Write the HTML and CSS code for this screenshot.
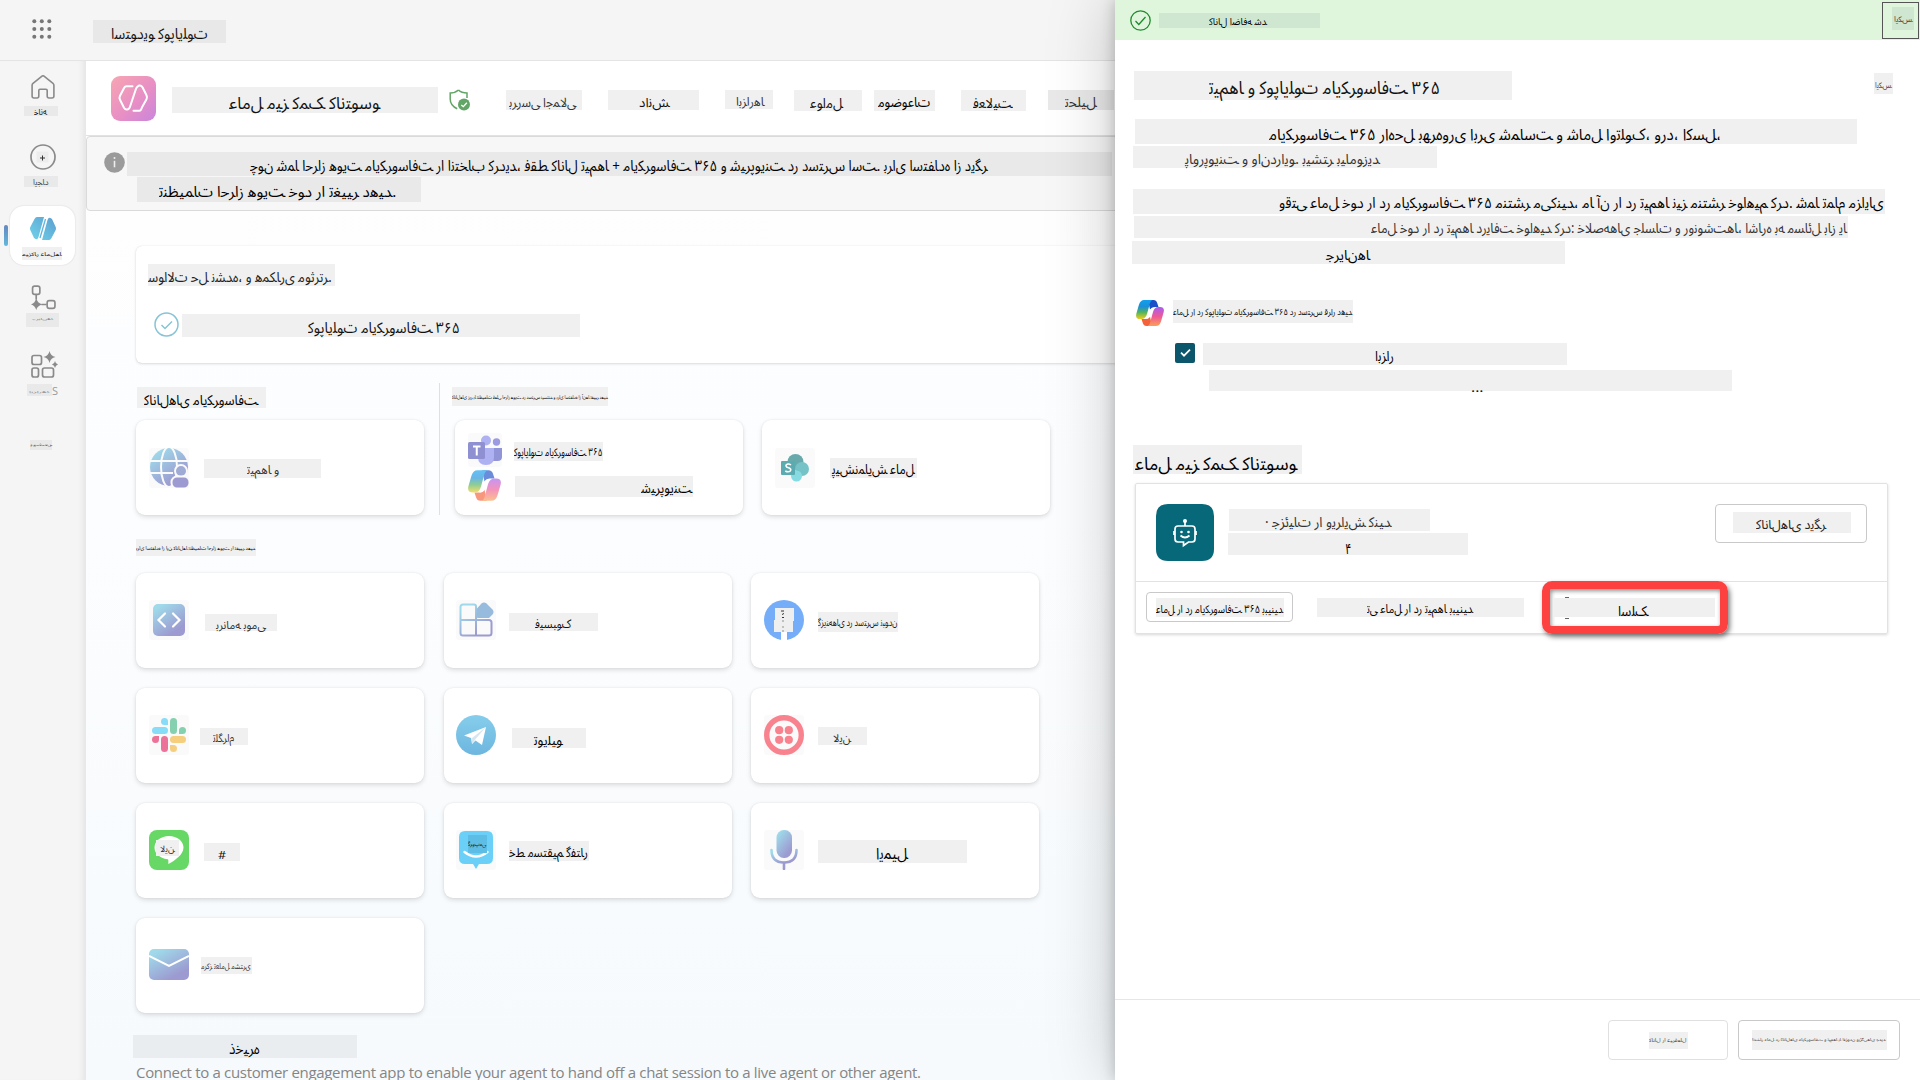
FILE: index.html
```html
<!DOCTYPE html>
<html lang="fa" dir="ltr">
<head>
<meta charset="utf-8">
<title>استودیو کوپایلوت</title>
<link rel="stylesheet" href="styles.css">
</head>
<body>
<svg class="defs" width="0" height="0">
  <defs>
    <linearGradient id="soft" x1="0" y1="0" x2=".7" y2="1"><stop offset=".15" stop-color="#9fd9ea"/><stop offset=".9" stop-color="#9c9ad0"/></linearGradient>
    <linearGradient id="pink" x1="0" y1="0" x2="1" y2="1"><stop offset="0" stop-color="#f7a6b2"/><stop offset=".55" stop-color="#e88fc4"/><stop offset="1" stop-color="#c985dc"/></linearGradient>
    <linearGradient id="blue" x1="1" y1="0" x2="0" y2="1"><stop offset="0" stop-color="#5b9fd0"/><stop offset="1" stop-color="#70d3ea"/></linearGradient>
    <linearGradient id="cpA" x1="0" y1="0" x2="0" y2="1"><stop offset="0" stop-color="#12a0f0"/><stop offset=".35" stop-color="#1b8fd8"/><stop offset=".65" stop-color="#52b45c"/><stop offset="1" stop-color="#f2cc1c"/></linearGradient>
    <linearGradient id="cpB" x1="0" y1="0" x2="0" y2="1"><stop offset="0" stop-color="#a85cf0"/><stop offset=".5" stop-color="#ee5a96"/><stop offset="1" stop-color="#fba055"/></linearGradient>
    <linearGradient id="tg" x1="0" y1="0" x2="0" y2="1"><stop offset="0" stop-color="#86cdec"/><stop offset="1" stop-color="#6db6de"/></linearGradient>
    <symbol id="copilot" viewBox="0 0 28 26">
      <path d="M12 0h5.500q2.800 0 3.700 3l1.300 4H19q-3.500 0-5 2.500z" fill="#1c50c8"/>
      <path d="M16 26h-5.500q-2.800 0-3.700-3l-1.300-4H9q3.500 0 5-2.500z" fill="#f4623a"/>
      <path d="M8 0h8.500q-1.800.5-2.500 3l-3 11q-1.400 5-5.500 5H4q-5 0-3.600-5.500L3 4.500Q4.500 0 8 0z" fill="url(#cpA)"/>
      <path d="M20 26h-8.500q1.800-.5 2.500-3l3-11q1.400-5 5.500-5H24q5 0 3.600 5.500l-2.600 9Q23.500 26 20 26z" fill="url(#cpB)"/>
      <path d="M19 7.200q-3.500 0-5 2.500L12.200 15q-.8 3-2.700 4 3.500 0 5-3l1.800-5.300q.8-2.700 2.700-3.500z" fill="#fff"/>
    </symbol>
  </defs>
</svg>
<div class="app">
  <header class="topbar">
    <svg class="waffle" viewBox="0 0 20 20" fill="#777"><circle cx="2.300" cy="2.300" r="2"/><circle cx="9.800" cy="2.300" r="2"/><circle cx="17.300" cy="2.300" r="2"/><circle cx="2.300" cy="10" r="2"/><circle cx="9.800" cy="10" r="2"/><circle cx="17.300" cy="10" r="2"/><circle cx="2.300" cy="17.700" r="2"/><circle cx="9.800" cy="17.700" r="2"/><circle cx="17.300" cy="17.700" r="2"/></svg>
    <span class="c product">استودیو کوپایلوت</span>
  </header>

  <nav class="rail">
    <svg class="i-home" viewBox="0 0 24 24" fill="none" stroke="#8a8a8a" stroke-width="1.600"><path d="M10.700 1.300 2 8.300q-.9.700-.9 2V21q0 2 1.900 2h3q1.800 0 1.800-2v-5.500q0-1.200 1.200-1.200h6q1.200 0 1.200 1.200V21q0 2 1.800 2h3q1.900 0 1.900-2V10.300q0-1.300-.9-2l-8.700-7q-1.300-1-2.600 0z"/></svg>
    <span class="c n-home">خانه</span>
    <svg class="i-plus" viewBox="0 0 26 26"><circle cx="13" cy="13" r="12" fill="none" stroke="#8a8a8a" stroke-width="1.700"/><path d="M6.500 7.500h12v11h-12z" fill="#ececec"/><path d="M10 14h5m-2.500-2.500v5" stroke="#333"/></svg>
    <span class="c n-make">ایجاد</span>
    <div class="current">
      <svg class="i-agent" viewBox="0 0 26 23"><path d="M7 0h7L8.500 20q-1 3-3 2L4 21 .3 13q-.6-1.500 0-3L4.500 2Q5.500 0 7 0zM19 23h-7l5.500-20q1-3 3-2L22 2l3.700 8q.6 1.500 0 3l-4.200 8q-1 2-2.500 2z" fill="url(#blue)"/><path d="M15.500 2 10 21" stroke="#5fb4dc" stroke-width="1.300"/></svg>
      <span class="c n-agent">میزکار عامل‌ها</span>
    </div>
    <svg class="i-flow" viewBox="0 0 24 24" fill="none" stroke="#8a8a8a" stroke-width="1.600"><rect x="1.500" y="1" width="7" height="8" rx="2"/><rect x="15.500" y="15" width="7.500" height="7.500" rx="2"/><path d="M5 9v5M10 18.700h5"/><path d="M5 12.500q1 5 6 6.200-5 1-6 5.300-1-4.300-5-5.300 4-1.200 5-6.200z" fill="#8a8a8a" stroke="none"/></svg>
    <span class="c n-flow">جریان‌ها</span>
    <svg class="i-tools" viewBox="0 0 27 27" fill="none" stroke="#8a8a8a" stroke-width="1.700"><rect x="1" y="4.500" width="9.500" height="9" rx="2"/><rect x="1" y="17" width="6.500" height="9" rx="2"/><rect x="11.500" y="17" width="11" height="9" rx="2"/><path d="M18.500 0q1 5 6 6-5 1-6 6-1-5-6-6 5-1 6-6zM24 10q.5 3 3 3.500-2.500.5-3 3.500-.5-3-3-3.500 2.500-.5 3-3.500z" fill="#8a8a8a" stroke="none"/></svg>
    <div class="n-tools-row"><span class="c n-tools">ابزارها</span><span class="latin">S</span></div>
    <span class="c n-more">بیشتر</span>
  </nav>

  <main class="main">
    <div class="agentbar">
      <svg class="i-app" viewBox="0 0 45 45"><rect width="45" height="45" rx="9" fill="url(#pink)"/><path d="M21.500 11h-6q-1.500 0-2.300 1.500L9 20.500q-1 2 0 4l4 8q1.500 2.500 4 1.500 1.500-.7 2-2.500l6-18q.7-2 2.500-3 2.500-.8 4 1.500l4 8q1 2 0 4l-4.500 8Q30 35.500 28.500 35.500h-6" transform="translate(0 -.7)" fill="none" stroke="#fff" stroke-width="2" stroke-linecap="round"/></svg>
      <span class="c agent-name">عامل میز کمک کانتوسو</span>
      <svg class="i-shield" viewBox="0 0 21 22"><path d="M9.500 1Q6 4 1.200 4v6q0 6.500 7 9.800M9.500 1q3 3 8.500 3v5" fill="none" stroke="#62a566" stroke-width="1.500"/><circle cx="15" cy="15.500" r="6" fill="#62a566"/><path d="m12.300 16 2 1.700 3.600-4" fill="none" stroke="#fff" stroke-width="1.300"/></svg>
      <span class="c tab1">بررسی اجمالی</span>
      <span class="c tab2">دانش</span>
      <span class="c tab3">ابزارها</span>
      <span class="c tab4">عوامل</span>
      <span class="c tab5">موضوعات</span>
      <span class="c tab6">فعالیت</span>
      <span class="c tab7">تحلیل</span>
    </div>
    <div class="notice">
      <svg class="i-info" viewBox="0 0 21 21"><circle cx="10.500" cy="10.500" r="10.300" fill="#9b9b9b"/><path d="M10.500 8.800v6.500" stroke="#eee" stroke-width="1.600"/><circle cx="10.500" cy="6" r="1" fill="#eee"/></svg>
      <div>
        <span class="c note1">چون شما احراز هویت مایکروسافت را انتخاب کردید، فقط کانال تیم‌ها + مایکروسافت ۳۶۵ و شیرپوینت در دسترس است. برای استفاده از دیگر</span>
        <span class="c note2">تنظیمات احراز هویت خود را تغییر دهید.</span>
      </div>
    </div>
    <section class="publish">
      <span class="c pub-title">سوالات حل نشده، و همکاری موثرتر.</span>
      <div class="row">
        <svg class="i-done" viewBox="0 0 25 25" fill="none" stroke="#86c4d6" stroke-width="1.500"><circle cx="12.500" cy="12.500" r="11.500"/><path d="m7.500 13 3.500 3.500 7-7"/></svg>
        <span class="c pub-item">کوپایلوت مایکروسافت ۳۶۵</span>
      </div>
    </section>

    <div class="groups">
      <section>
        <span class="c g1">کانال‌های مایکروسافت</span>
        <div class="card first">
          <svg class="ico" viewBox="0 0 40 40"><rect width="40" height="40" rx="3" fill="#fafafa"/><circle cx="20" cy="19" r="19" fill="url(#soft)"/><g fill="none" stroke="#fafafa" stroke-width="2"><ellipse cx="20" cy="19" rx="8" ry="20"/><path d="M0 13h40M0 25h24"/></g><circle cx="32" cy="23" r="6" fill="#9fabd4" stroke="#fafafa" stroke-width="2"/><rect x="22.500" y="28.500" width="18" height="12" rx="5.500" fill="#9c9ad0" stroke="#fafafa" stroke-width="2"/></svg>
          <span class="c k1">تیم‌ها و</span>
        </div>
      </section>
      <section class="second">
        <span class="c g2">کانال‌های زیر با تنظیمات فعلی احراز هویت در دسترس نیستند و برای استفاده از آن‌ها تغییر دهید</span>
        <div class="pair">
          <div class="card double">
            <div class="row">
              <svg class="i-teams" viewBox="0 0 34 34"><rect width="34" height="34" rx="3" fill="#fafafa"/><circle cx="28.500" cy="9" r="3.700" fill="#9a9be0"/><path d="M25 15h9v9q0 4-4.500 4H25z" fill="#9294d8"/><circle cx="18" cy="7.500" r="5" fill="#aeb1f2"/><path d="M10 15h16v9q0 8-8 8t-8-8z" fill="#aeb1f2"/><rect y="9" width="17" height="17" rx="1.500" fill="#8e90d2"/><path d="M5 13.500h7.500m-3.750 0v9" stroke="#fff" stroke-width="2"/></svg>
              <span class="c k2">کوپایلوت مایکروسافت ۳۶۵</span>
            </div>
            <div class="row">
              <svg class="i-cp faded"><use href="#copilot"/></svg>
              <span class="c k3">شیرپوینت</span>
            </div>
          </div>
          <div class="card">
            <svg class="ico" viewBox="0 0 40 40"><rect width="40" height="40" rx="3" fill="#fafafa"/><circle cx="20.500" cy="14" r="8" fill="#68a9ab"/><circle cx="27" cy="21" r="7" fill="#75c3c7"/><circle cx="21.500" cy="28" r="5.500" fill="#86dbe2"/><rect x="6" y="13" width="14" height="14" rx="1" fill="#5cabb0"/><path d="M16 17q-1.500-1.200-3.200-1-2 .4-1.800 2 .3 1.300 2.500 1.800 2.500.7 2.300 2.300-.5 1.800-2.800 1.700-1.500 0-2.700-1" fill="none" stroke="#fff" stroke-width="1.500"/></svg>
            <span class="c k4">پیش‌نمایش عامل</span>
          </div>
        </div>
      </section>
    </div>

    <span class="c g3">برای استفاده از این کانال‌ها تنظیمات احراز هویت را تغییر دهید</span>
    <div class="grid">
      <div class="card">
        <svg class="ico" viewBox="0 0 40 40"><rect width="40" height="40" rx="3" fill="#fafafa"/><rect x="4" y="4" width="32" height="32" rx="5" fill="url(#soft)"/><path d="m16 13.500-6.500 6.500 6.500 6.500m8-13 6.500 6.500-6.500 6.500" fill="none" stroke="#fff" stroke-width="2.200" stroke-linecap="round"/></svg>
        <span class="c k5">برنامه بومی</span>
      </div>
      <div class="card">
        <svg class="ico" viewBox="0 0 40 40"><rect width="40" height="40" rx="3" fill="#fafafa"/><path d="M7 4.500h11a2 2 0 0 1 2 2V20H4.500V7q0-2.500 2.500-2.500zM4.500 20H20v15.500H7q-2.500 0-2.500-2.500zM20 20h13q2.500 0 2.500 2.500V33q0 2.500-2.500 2.500H20z" fill="none" stroke="url(#soft)" stroke-width="2"/><path d="M25.500 3.500q2.500-2 5 0l6 6q2 2.500 0 5L33 18H22q-1.500 0-1.500-1.500V9z" fill="#97bbdd"/></svg>
        <span class="c k6">فیسبوک</span>
      </div>
      <div class="card">
        <svg class="ico" viewBox="0 0 40 40"><circle cx="20" cy="20" r="20" fill="#76adf8"/><path d="M17 31h6v9h-6z" fill="#fff"/><path d="M11 8h19v13h-1v11H10V20h1z" fill="#efefef"/><path d="M17 11h3m-2 3.500 2-1m-2 4h2m-1 3v1m0 5v1m0 3v1" stroke="#333"/></svg>
        <span class="c k7">گزینه‌های در دسترس نبودن</span>
      </div>
      <div class="card">
        <svg class="ico" viewBox="0 0 40 40"><rect width="40" height="40" rx="3" fill="#fafafa"/><g stroke-width="7" stroke-linecap="round"><path d="M6.500 15.500h9" stroke="#87dcf7"/><path d="M24.500 6.500v9" stroke="#84d0af"/><path d="M15.500 24.500v9" stroke="#ec7299"/><path d="M24.500 24.500h9" stroke="#f5cf7e"/></g><path d="M15.500 3a3.500 3.500 0 1 0 0 7H19V6.500A3.500 3.500 0 0 0 15.500 3z" fill="#87dcf7"/><path d="M37 15.500a3.500 3.500 0 1 0-7 0V19h3.500a3.500 3.500 0 0 0 3.500-3.500z" fill="#84d0af"/><path d="M3 24.500a3.500 3.500 0 1 0 7 0V21H6.500A3.500 3.500 0 0 0 3 24.500z" fill="#ec7299"/><path d="M24.500 37a3.500 3.500 0 1 0 0-7H21v3.500a3.500 3.500 0 0 0 3.500 3.500z" fill="#f5cf7e"/></svg>
        <span class="c k8">تلگرام</span>
      </div>
      <div class="card">
        <svg class="ico" viewBox="0 0 40 40"><circle cx="20" cy="20" r="20" fill="url(#tg)"/><path d="M8 20.500 30 12 26 30l-6.500-4.500-3.500 3.500-1-6z" fill="#fff"/><path d="m30 12-14.500 11.500.8 5.500 2.500-4z" fill="#d5e6f0"/></svg>
        <span class="c k9">تویلیو</span>
      </div>
      <div class="card">
        <svg class="ico" viewBox="0 0 40 40"><rect width="40" height="40" rx="3" fill="#fafafa"/><circle cx="20" cy="20" r="17.300" fill="#fafafa" stroke="#f8838f" stroke-width="5.400"/><g fill="#f8838f"><circle cx="15.200" cy="15.200" r="4.100"/><circle cx="24.800" cy="15.200" r="4.100"/><circle cx="15.200" cy="24.800" r="4.100"/><circle cx="24.800" cy="24.800" r="4.100"/></g></svg>
        <span class="c k10">لاین</span>
      </div>
      <div class="card">
        <div class="badge">
          <svg class="ico" viewBox="0 0 40 40"><rect width="40" height="40" rx="8" fill="#67d766"/><path d="M20 6c-8 0-14.500 5-14.500 11.500 0 6 5 10.500 13 11.800 1 .2 1 1 .8 4.700 6-3.200 15.200-9 15.200-16.500C34.500 11 28 6 20 6z" fill="#fff"/></svg>
          <span class="c line-tag">لاین</span>
        </div>
        <span class="c k11">#</span>
      </div>
      <div class="card">
        <div class="badge">
          <svg class="ico" viewBox="0 0 40 40"><rect width="40" height="40" rx="3" fill="#fafafa"/><path d="M9 1h22q6 0 6 6v21q0 6-6 6h-8l-3 5-3-5H9q-6 0-6-6V7q0-6 6-6z" fill="#6bd0f7"/><path d="M8.500 22q11.500 9 23 0" fill="none" stroke="#fff" stroke-width="2.400" stroke-linecap="round"/></svg>
          <span class="c gm-tag">گروپ‌می</span>
        </div>
        <span class="c k12">خط مستقیم گفتار</span>
      </div>
      <div class="card">
        <svg class="ico" viewBox="0 0 40 40"><rect width="40" height="40" rx="3" fill="#fafafa"/><rect x="12.500" y="0" width="15.500" height="28" rx="7.500" fill="url(#soft)"/><path d="M7.500 20q0 12.500 12.500 12.500T32.500 20" fill="none" stroke="url(#soft)" stroke-width="2.600" stroke-linecap="round"/><path d="M20 33v6" stroke="#9c9ad0" stroke-width="2.600" stroke-linecap="round"/></svg>
        <span class="c k13">ایمیل</span>
      </div>
      <div class="card">
        <svg class="ico" viewBox="0 0 40 40"><rect y="4" width="40" height="31" rx="5" fill="url(#soft)"/><path d="m0 11 20 10 20-10" fill="none" stroke="#fff" stroke-width="2"/></svg>
        <span class="c k14">مرکز تعامل مشتری</span>
      </div>
    </div>
    <span class="c store">ذخیره</span>
    <p class="hint">Connect to a customer engagement app to enable your agent to hand off a chat session to a live agent or other agent.</p>
  </main>
</div>

<aside class="drawer">
  <div class="toast">
    <svg class="i-ok" viewBox="0 0 21 21" fill="none" stroke="#1f8a2b" stroke-width="1.300"><circle cx="10.500" cy="10.500" r="9.700"/><path d="m5.500 11 3.300 3.500L15.500 7"/></svg>
    <span class="c ok-text">کانال اضافه شد</span>
    <div class="toast-close"><span class="c x1">ایکس</span></div>
  </div>
  <div class="body">
    <div class="row">
      <span class="c d-title">تیم‌ها و کوپایلوت مایکروسافت ۳۶۵</span>
      <span class="c x2">ایکس</span>
    </div>
    <span class="c p1">مایکروسافت ۳۶۵ راه‌حل بهره‌وری ابری شماست و شامل اوتلوک، ورد، اکسل،</span>
    <span class="c p2">پاورپوینت و وان‌درایو. بیشتر بیاموزید</span>
    <span class="c p3">وقتی عامل خود را در مایکروسافت ۳۶۵ منتشر می‌کنید، ما آن را در تیم‌ها نیز منتشر خواهیم کرد. شما تمام مزایای</span>
    <span class="c p4">عامل خود را در تیم‌ها دریافت خواهید کرد: خلاصه‌های جلسات و رونوشت‌ها، اشاره به مسائل باز یا</span>
    <span class="c p5">جریان‌ها</span>
    <div class="row enable">
      <svg class="i-cp2"><use href="#copilot"/></svg>
      <span class="c e1">عامل را در کوپایلوت مایکروسافت ۳۶۵ در دسترس قرار دهید</span>
    </div>
    <div class="row tick">
      <svg class="i-box" viewBox="0 0 20 20"><rect width="20" height="20" rx="2" fill="#0c566b"/><path d="m6 9.700 3 3 6-6" fill="none" stroke="#fff" stroke-width="1.700"/></svg>
      <span class="c e2">ابزار</span>
    </div>
    <span class="c e3">...</span>
    <span class="c h2">عامل میز کمک کانتوسو</span>
    <div class="panel">
      <div class="panel-top">
        <svg class="i-bot" viewBox="0 0 58 57"><path d="M12 0h34q12 0 12 12v33q0 12-12 12H12Q0 57 0 45V12Q0 0 12 0z" fill="#066879"/><g fill="none" stroke="#fff" stroke-width="1.700"><path d="M22 22h14q3 0 3 3v10q0 3-3 3h-3.500l-5 3.500V38H22q-3 0-3-3V25q0-3 3-3zM29 17v5M18 27v4M40 27v4"/><path d="M24.500 31.500q4.500 4 9 0"/></g><g fill="#fff"><circle cx="29" cy="17" r="2"/><circle cx="25.500" cy="28" r="1.300"/><circle cx="32.500" cy="28" r="1.300"/></g></svg>
        <div class="facts">
          <span class="c f1">· جزئیات را ویرایش کنید</span>
          <span class="c f2">۴</span>
        </div>
        <div class="btn other"><span class="c b1">کانال‌های دیگر</span></div>
      </div>
      <div class="panel-bottom">
        <div class="btn see"><span class="c b2">عامل را در مایکروسافت ۳۶۵ ببینید</span></div>
        <span class="c b3">تی عامل را در تیم‌ها ببینید</span>
        <div class="focus"><span class="c b4">اسلک</span></div>
      </div>
    </div>
  </div>
  <footer class="foot">
    <div class="btn soft"><span class="c b5">کانال را غیرفعال</span></div>
    <div class="btn"><span class="c b6">انتشار عامل در کانال‌های مایکروسافت و تیم‌ها با افزودن ویژگی‌های جدید</span></div>
  </footer>
</aside>
<script src="labels.js"></script>
</body>
</html>
```

FILE: styles.css
```css
* { box-sizing: border-box; }
html, body { margin: 0; height: 1080px; overflow: hidden; }
body { position: relative; width: 1920px; background: #f5f5f5; color: #111; font-family: "Noto Sans Arabic", "DejaVu Sans", "Noto Sans", sans-serif; }
svg { display: block; flex: none; }
.defs { position: absolute; }
.row { display: flex; align-items: flex-start; }

/* Label plates. --w/--h plate size, --l/--t margins, --x text offset, --tw text width, --f font size, --y text drop */
.c {
  display: block; flex: none;
  width: var(--w); height: var(--h);
  margin: var(--t, 0) 0 0 var(--l, 0);
  padding-left: var(--x, 0);
  background: #f0f0f0;
  white-space: nowrap;
  font-size: var(--f, 14px);
  line-height: var(--h);
}
.c .ink { display: inline-block; direction: ltr; unicode-bidi: bidi-override; transform-origin: 0 50%; margin-top: var(--y, 2px); line-height: var(--h); vertical-align: top; }

.app { display: grid; grid-template: 61px 1019px / 85px 1835px; }
.topbar { grid-column: 1 / 3; display: flex; border-bottom: 1px solid #e4e4e4; }
.waffle { width: 20px; height: 20px; margin: 19px 0 0 32px; }
.product { --w: 133px; --h: 23px; --l: 41px; --t: 20px; --x: 18px; --tw: 97px; --f: 15px; --y: 3px; background: #e8e8e8; }

.rail { display: flex; flex-direction: column; align-items: flex-start; box-shadow: inset -6px 0 6px -4px #00000012; }
.rail .c { background: #e9e9e9; }
.i-home { width: 24px; height: 24px; margin: 14px 0 0 31px; }
.n-home { --w: 34px; --h: 10px; --l: 24px; --t: 7px; --x: 10px; --tw: 13px; --f: 9px; --y: 2px; }
.i-plus { width: 26px; height: 26px; margin: 28px 0 0 30px; }
.n-make { --w: 34px; --h: 11px; --l: 24px; --t: 6px; --x: 9px; --tw: 16px; --f: 8px; --y: 1px; color: #444; }
.current { position: relative; width: 65px; height: 59px; margin: 19px 0 0 10px; background: #fff; border-radius: 14px; box-shadow: 0 0 2px #00000024; padding: 11px 0 0 12px; }
.current::before { content: ""; position: absolute; left: -6px; top: 19px; width: 4px; height: 21px; border-radius: 2px; background: linear-gradient(#6488c0, #62b8dc); }
.i-agent { width: 26px; height: 23px; margin-left: 8px; }
.rail .n-agent { --w: 40px; --h: 13px; --t: 7px; --tw: 40px; --f: 5px; --y: 1px; background: #f0f0f0; }
.i-flow { width: 25px; height: 25px; margin: 20px 0 0 31px; }
.n-flow { --w: 33px; --h: 14px; --l: 26px; --t: 3px; --x: 6px; --tw: 20px; --f: 3px; --y: -1px; color: #777; }
.i-tools { width: 27px; height: 27px; margin: 24px 0 0 31px; }
.n-tools-row { display: flex; margin: 6px 0 0 27px; }
.n-tools { --w: 25px; --h: 12px; --x: 2px; --tw: 20px; --f: 3px; color: #888; }
.latin { font: 11px/13px "Open Sans", sans-serif; color: #999; }
.n-more { --w: 22px; --h: 10px; --l: 30px; --t: 43px; --tw: 22px; --f: 4px; --y: 0px; color: #555; }

.main { display: flex; flex-direction: column; align-items: flex-start; background: linear-gradient(#fefefe, #fcfdfe 45%, #f6fafd); border-left: 1px solid #e8e8e8; padding-left: 50px; overflow: hidden; }
.agentbar { display: flex; flex: none; width: 1834px; height: 75px; margin-left: -50px; background: #fff; border-bottom: 1px solid #e2e2e2; }
.i-app { width: 45px; height: 45px; margin: 15px 0 0 25px; }
.agent-name { --w: 266px; --h: 26px; --l: 16px; --t: 26px; --x: 57px; --tw: 151px; --f: 17px; --y: 4px; }
.i-shield { width: 21px; height: 22px; margin: 28px 0 0 11px; }
.tab1 { --w: 76px; --h: 20px; --l: 36px; --t: 29px; --x: 3px; --tw: 67px; --f: 13px; --y: 3px; color: #333; }
.tab2 { --w: 91px; --h: 20px; --l: 26px; --t: 29px; --x: 31px; --tw: 30px; --f: 13px; --y: 3px; }
.tab3 { --w: 48px; --h: 19px; --l: 26px; --t: 29px; --x: 11px; --tw: 28px; --f: 12px; --y: 3px; color: #333; }
.tab4 { --w: 68px; --h: 21px; --l: 21px; --t: 29px; --x: 16px; --tw: 33px; --f: 14px; --y: 3px; }
.tab5 { --w: 61px; --h: 21px; --l: 12px; --t: 29px; --x: 4px; --tw: 52px; --f: 14px; color: #000; }
.tab6 { --w: 65px; --h: 21px; --l: 26px; --t: 29px; --x: 12px; --tw: 39px; --f: 14px; --y: 3px; }
.tab7 { --w: 66px; --h: 20px; --l: 22px; --t: 29px; --x: 17px; --tw: 31px; --f: 14px; --y: 3px; color: #333; }
.main .agentbar .tab7 { background: #e9e9e9; }

.notice { display: flex; flex: none; width: 1834px; height: 75px; margin-left: -50px; padding: 15px 0 0 17px; background: #f7f7f7; border: 1px solid #dadada; border-radius: 4px; }
.notice .c { background: #e9e9e9; }
.i-info { width: 21px; height: 21px; }
.note1 { --w: 985px; --h: 24px; --l: 2px; --x: 123px; --tw: 737px; --f: 15px; color: #000; }
.note2 { --w: 284px; --h: 25px; --l: 12px; --t: 1px; --x: 22px; --tw: 237px; --f: 15px; --y: 3px; color: #000; }

.publish { flex: none; width: 1700px; height: 117px; margin-top: 35px; padding: 18px 0 0 12px; background: #fff; border-radius: 6px; box-shadow: 0 1px 3px #00000022, 0 0 1px #00000022; }
.pub-title { --w: 187px; --h: 22px; --tw: 184px; --f: 14px; --y: 3px; color: #222; }
.i-done { width: 25px; height: 25px; margin: 26px 0 0 6px; }
.pub-item { --w: 398px; --h: 23px; --l: 3px; --t: 28px; --x: 126px; --tw: 152px; --f: 15px; --y: 3px; }

.groups { display: flex; flex: none; margin-top: 20px; height: 132px; }
.second { margin-left: 15px; padding-left: 12px; border-left: 1px solid #e0e0e0; }
.g1 { --w: 129px; --h: 21px; --l: 1px; --t: 4px; --x: 7px; --tw: 114px; --f: 14px; --y: 3px; color: #000; }
.g2 { --w: 156px; --h: 19px; --t: 4px; --tw: 156px; --f: 5px; --y: 1px; color: #000; }
.pair { display: flex; gap: 19px; margin: 14px 0 0 3px; }
.card { display: flex; flex: none; align-items: flex-start; width: 288px; height: 95px; padding: 27px 0 0 13px; background: #fff; border-radius: 9px; box-shadow: 0 2px 5px #00000021, 0 0 2px #00000014; }
.first, .pair .card { padding-top: 28px; }
.first { margin-top: 12px; }
.ico { width: 40px; height: 40px; }
.badge { position: relative; }
.pair .double { flex-direction: column; padding-top: 13px; }
.i-teams { width: 34px; height: 34px; }
.i-cp { width: 33px; height: 31px; margin-top: 3px; }
.faded { opacity: .65; }
.k1 { --w: 117px; --h: 19px; --l: 15px; --t: 11px; --x: 43px; --tw: 32px; --f: 12px; color: #333; }
.k2 { --w: 89px; --h: 19px; --l: 12px; --t: 9px; --tw: 88px; --f: 11px; --y: 1px; color: #000; }
.k3 { --w: 178px; --h: 21px; --l: 14px; --t: 9px; --x: 126px; --tw: 51px; --f: 14px; color: #000; }
.k4 { --w: 87px; --h: 20px; --l: 15px; --t: 10px; --x: 2px; --tw: 82px; --f: 14px; color: #000; }
.g3 { --w: 120px; --h: 17px; --t: 24px; --tw: 119px; --f: 5px; --y: 1px; color: #000; }
.grid { display: grid; flex: none; grid-template-columns: 308px 307px 288px; row-gap: 20px; margin-top: 17px; }
.grid .card:nth-child(3n + 2) { padding-left: 12px; }
.k5 { --w: 72px; --h: 17px; --l: 16px; --t: 14px; --x: 11px; --tw: 49px; --f: 11px; --y: 3px; color: #333; }
.k6 { --w: 89px; --h: 18px; --l: 13px; --t: 13px; --x: 26px; --tw: 36px; --f: 12px; --y: 3px; }
.k7 { --w: 80px; --h: 20px; --l: 14px; --t: 12px; --tw: 79px; --f: 10px; --y: 1px; }
.k8 { --w: 48px; --h: 17px; --l: 11px; --t: 13px; --x: 13px; --tw: 21px; --f: 11px; color: #333; }
.k9 { --w: 74px; --h: 20px; --l: 16px; --t: 13px; --x: 22px; --tw: 28px; --f: 13px; --y: 3px; color: #000; }
.k10 { --w: 49px; --h: 18px; --l: 14px; --t: 12px; --x: 15px; --tw: 18px; --f: 11px; --y: 3px; color: #333; }
.k11 { --w: 36px; --h: 18px; --l: 15px; --t: 13px; --x: 14px; --tw: 8px; --f: 11px; --y: 4px; }
.k12 { --w: 80px; --h: 20px; --l: 13px; --t: 11px; --tw: 79px; --f: 13px; --y: 2px; color: #000; }
.k13 { --w: 149px; --h: 23px; --l: 14px; --t: 10px; --x: 58px; --tw: 32px; --f: 16px; --y: 3px; color: #000; }
.k14 { --w: 51px; --h: 17px; --l: 12px; --t: 12px; --tw: 50px; --f: 8px; --y: 1px; color: #333; }
.line-tag { position: absolute; left: 7px; top: 10px; --w: 23px; --h: 16px; --x: 4px; --tw: 15px; --f: 9px; color: #333; }
.badge .gm-tag { position: absolute; left: 12px; top: 5px; --w: 19px; --h: 18px; --tw: 18px; --f: 6px; --y: 0px; background: #5dbde4; }
.store { --w: 224px; --h: 23px; --l: -3px; --t: 22px; --x: 96px; --tw: 31px; --f: 15px; --y: 3px; color: #000; }
.main .store { background: #e9edf0; }
.hint { margin: 2px 0 0; height: 20px; font: 15px/24px "Open Sans", sans-serif; letter-spacing: -.32px; color: #858585; white-space: nowrap; }

/* Side sheet over the page */
.drawer { position: absolute; top: 0; right: 0; width: 805px; height: 1080px; display: flex; flex-direction: column; background: #fff; box-shadow: 0 0 64px #00000038, 0 0 14px #00000038; }
.toast { display: flex; flex: none; height: 40px; background: #dff6dd; }
.toast .c { background: #cfe7d0; }
.i-ok { width: 21px; height: 21px; margin: 10px 0 0 15px; }
.ok-text { --w: 161px; --h: 15px; --l: 8px; --t: 13px; --x: 50px; --tw: 58px; --f: 10px; --y: 1px; color: #000; }
.toast-close { width: 37px; height: 37px; margin: 2px 1px 0 auto; border: 1px solid #555; padding: 4px 0 0 9px; }
.x1 { --w: 22px; --h: 23px; --x: 2px; --tw: 19px; --f: 8px; --y: 1px; color: #444; }
.body { flex: 1; padding: 31px 0 0 17px; }
.d-title { --w: 378px; --h: 29px; --l: 2px; --x: 75px; --tw: 231px; --f: 18px; --y: 3px; }
.x2 { --w: 19px; --h: 21px; --l: 362px; --t: 2px; --x: 1px; --tw: 17px; --f: 8px; --y: 2px; color: #444; }
.p1 { --w: 722px; --h: 25px; --l: 3px; --t: 19px; --x: 134px; --tw: 452px; --f: 16px; --y: 4px; color: #000; }
.p2 { --w: 304px; --h: 22px; --l: 1px; --t: 2px; --x: 52px; --tw: 194px; --f: 14px; --y: 3px; color: #333; }
.p3 { --w: 752px; --h: 25px; --l: 1px; --t: 21px; --x: 146px; --tw: 605px; --f: 15px; color: #000; }
.p4 { --w: 714px; --h: 22px; --l: 2px; --t: 2px; --x: 237px; --tw: 476px; --f: 14px; color: #333; }
.p5 { --w: 433px; --h: 23px; --t: 3px; --x: 194px; --tw: 44px; --f: 14px; --y: 3px; color: #000; }
.enable { margin: 36px 0 0 4px; }
.i-cp2 { width: 28px; height: 26px; }
.e1 { --w: 180px; --h: 23px; --l: 9px; --tw: 179px; --f: 9px; --y: 1px; color: #000; }
.tick { margin: 17px 0 0 43px; }
.i-box { width: 20px; height: 20px; }
.e2 { --w: 364px; --h: 22px; --l: 8px; --x: 172px; --tw: 19px; --f: 14px; --y: 3px; color: #000; }
.e3 { --w: 523px; --h: 21px; --l: 77px; --t: 5px; --x: 262px; --tw: 12px; --f: 13px; --y: 8px; }
.h2 { --w: 169px; --h: 29px; --l: 1px; --t: 54px; --x: 2px; --tw: 162px; --f: 18px; --y: 5px; color: #000; }
.panel { width: 753px; height: 151px; margin: 9px 0 0 3px; border: 1px solid #e2e2e2; border-radius: 2px; box-shadow: 0 1px 3px #00000028; }
.panel-top { display: flex; height: 98px; padding: 20px 0 0 20px; border-bottom: 1px solid #e2e2e2; }
.i-bot { width: 58px; height: 57px; }
.facts { margin: 5px 0 0 14px; }
.f1 { --w: 201px; --h: 22px; --l: 1px; --x: 36px; --tw: 126px; --f: 14px; --y: 3px; color: #333; }
.f2 { --w: 240px; --h: 22px; --t: 2px; --x: 117px; --tw: 7px; --f: 15px; --y: 5px; color: #000; }
.btn { display: flex; flex: none; align-items: center; justify-content: center; border: 1px solid #c9c9c9; border-radius: 4px; background: #fff; }
.other { width: 152px; height: 39px; margin-left: 247px; }
.b1 { --w: 118px; --h: 21px; --l: 2px; --t: -2px; --x: 23px; --tw: 70px; --f: 13px; --y: 3px; color: #222; }
.panel-bottom { display: flex; }
.see { width: 147px; height: 30px; margin: 10px 0 0 10px; }
.b2 { --w: 128px; --h: 19px; --tw: 127px; --f: 11px; color: #000; }
.b3 { --w: 207px; --h: 19px; --l: 24px; --t: 16px; --x: 50px; --tw: 106px; --f: 12px; color: #000; }
.focus { width: 186px; height: 53px; margin: -1px 0 0 18px; padding: 9px 0 0 4px; border: 8px solid #fd4141; border-radius: 10px; box-shadow: 2px 3px 5px #00000080, inset 1px 2px 4px #00000070; }
.b4 { position: relative; --w: 161px; --h: 19px; --x: 64px; --tw: 30px; --f: 14px; --y: 4px; color: #000; }
.b4::before { content: ""; position: absolute; left: 11px; top: -1px; width: 4px; height: 20px; border: 1px solid #666; border-width: 1px 0; }
.foot { display: flex; flex: none; height: 81px; gap: 10px; padding: 20px 20px 0 0; justify-content: flex-end; border-top: 1px solid #e6e6e6; }
.foot .btn { width: 162px; height: 40px; }
.foot .soft { width: 120px; border-color: #e0e0e0; }
.b5 { --w: 39px; --h: 17px; --tw: 38px; --f: 5px; --y: 0px; color: #444; }
.b6 { --w: 135px; --h: 20px; --tw: 134px; --f: 4px; --y: 0px; color: #333; }
```

FILE: labels.js
```js
// First contextual form of each letter; the forms run isolated, final, initial, medial.
const FOUR = { "ئ": 0xFE89, "ب": 0xFE8F, "پ": 0xFB56, "ت": 0xFE95, "ث": 0xFE99, "ج": 0xFE9D, "چ": 0xFB7A, "ح": 0xFEA1, "خ": 0xFEA5, "س": 0xFEB1, "ش": 0xFEB5, "ص": 0xFEB9, "ض": 0xFEBD, "ط": 0xFEC1, "ظ": 0xFEC5, "ع": 0xFEC9, "غ": 0xFECD, "ف": 0xFED1, "ق": 0xFED5, "ک": 0xFB8E, "گ": 0xFB92, "ل": 0xFEDD, "م": 0xFEE1, "ن": 0xFEE5, "ه": 0xFEE9, "ی": 0xFBFC };
const TWO = { "آ": 0xFE81, "ا": 0xFE8D, "د": 0xFEA9, "ذ": 0xFEAB, "ر": 0xFEAD, "ز": 0xFEAF, "ژ": 0xFB8A, "و": 0xFEED };

function shape(text) {
  let out = "";
  for (let i = 0; i < text.length; i++) {
    const ch = text[i], next = text[i + 1];
    const joinsBack = i > 0 && text[i - 1] in FOUR;
    if (ch === "\u200c") continue;
    if (ch === "ل" && next === "ا") {
      out += String.fromCharCode(joinsBack ? 0xFEFC : 0xFEFB);
      i++;
    } else if (ch in FOUR) {
      const joinsOn = next in FOUR || next in TWO;
      out += String.fromCharCode(FOUR[ch] + (joinsBack ? 1 : 0) + (joinsOn ? 2 : 0));
    } else if (ch in TWO) {
      out += String.fromCharCode(TWO[ch] + (joinsBack ? 1 : 0));
    } else {
      out += ch;
    }
  }
  return out;
}

// Shape every label and fit it to the text width of its plate.
document.querySelectorAll(".c").forEach(label => {
  const ink = document.createElement("span");
  ink.className = "ink";
  ink.textContent = shape(label.textContent.trim());
  label.replaceChildren(ink);
  const target = parseFloat(getComputedStyle(label).getPropertyValue("--tw"));
  if (target) ink.style.transform = `scaleX(${target / ink.offsetWidth})`;
});
```
